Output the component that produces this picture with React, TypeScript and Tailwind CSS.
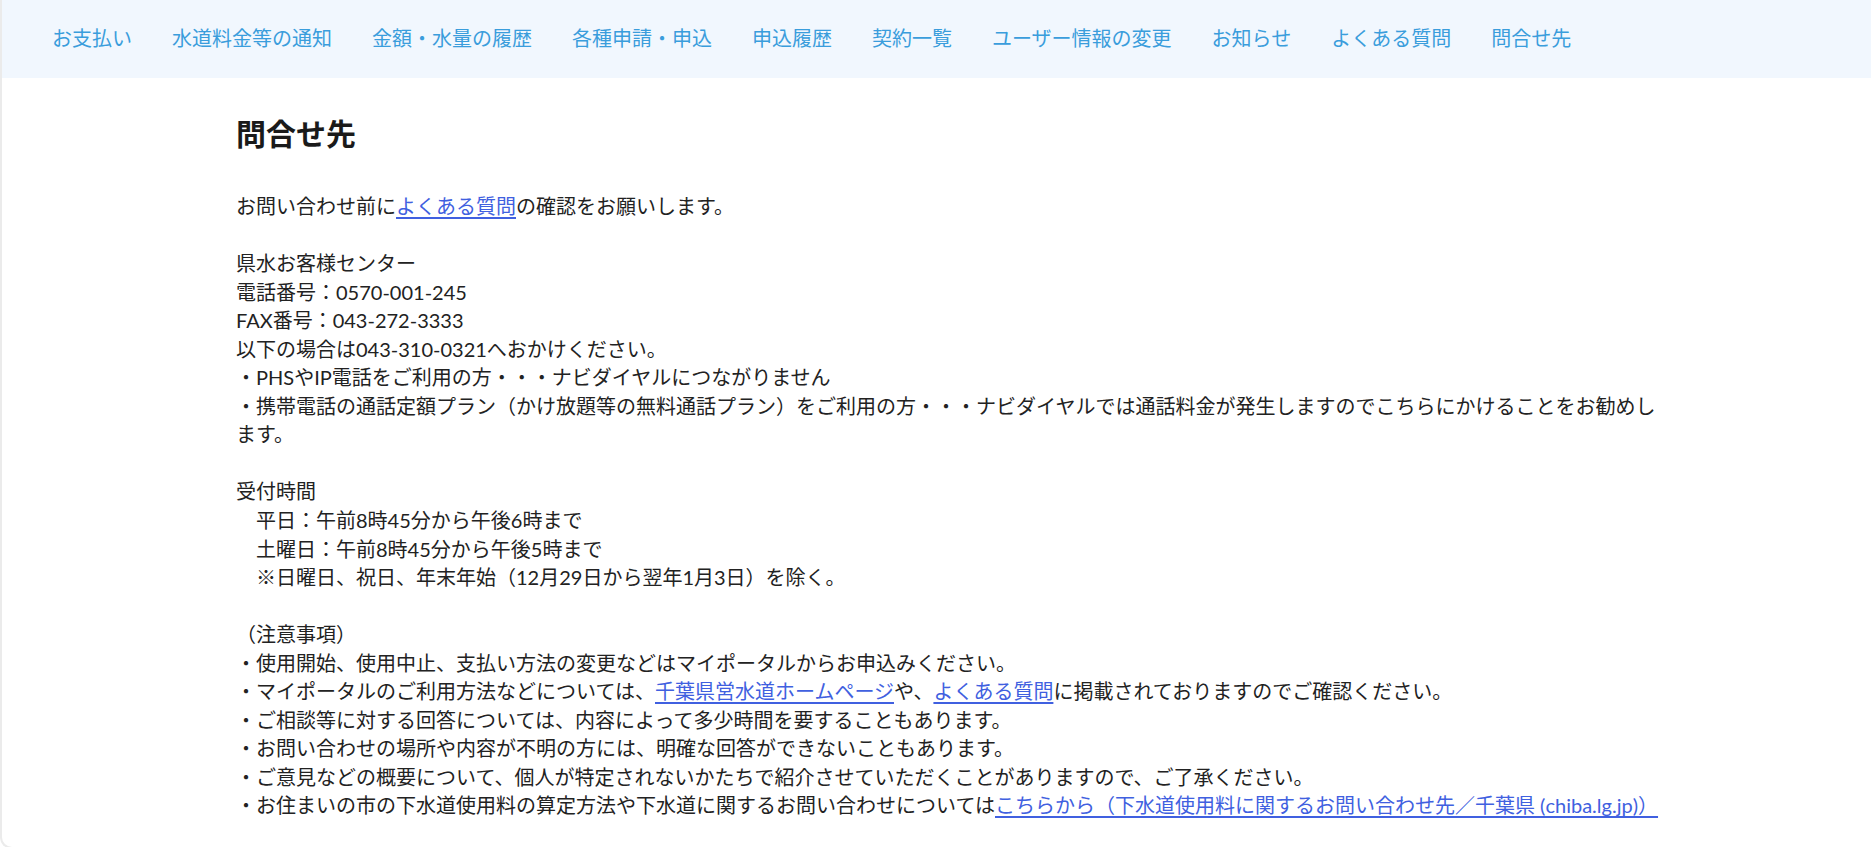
const navItems = [
  'お支払い',
  '水道料金等の通知',
  '金額・水量の履歴',
  '各種申請・申込',
  '申込履歴',
  '契約一覧',
  'ユーザー情報の変更',
  'お知らせ',
  'よくある質問',
  '問合せ先',
];

const linkClass = 'text-[#4060e0] underline underline-offset-[3px]';

const App = () => {
  return (
    <div className="h-[849px] overflow-hidden rounded-bl-[12px] border-b-2 border-l-2 border-[#ebebeb] bg-white font-['Lato','Noto_Sans_CJK_JP',sans-serif] text-[#222]">
      <nav className="flex h-[78px] items-center gap-10 bg-[#f1f7fe] pl-[50px] pb-[2px]">
        {navItems.map((label) => (
          <a key={label} href="#" className="text-[20px] leading-none text-[#3a9ddc]">
            {label}
          </a>
        ))}
      </nav>

      <main className="ml-[234px] w-[1432px] pt-[33px]">
        <h1 className="text-[30px] font-bold leading-[45px] text-[#1a1a1a]">問合せ先</h1>

        <div className="mt-[36px] whitespace-pre-line text-[20px] leading-[28.55px]">
          <p>
            お問い合わせ前に<a href="#" className={linkClass}>よくある質問</a>の確認をお願いします。
          </p>
          <br />
          <p>
            {`県水お客様センター
電話番号：0570-001-245
FAX番号：043-272-3333
以下の場合は043-310-0321へおかけください。
・PHSやIP電話をご利用の方・・・ナビダイヤルにつながりません
・携帯電話の通話定額プラン（かけ放題等の無料通話プラン）をご利用の方・・・ナビダイヤルでは通話料金が発生しますのでこちらにかけることをお勧めします。`}
          </p>
          <br />
          <p>
            {`受付時間
　平日：午前8時45分から午後6時まで
　土曜日：午前8時45分から午後5時まで
　※日曜日、祝日、年末年始（12月29日から翌年1月3日）を除く。`}
          </p>
          <br />
          <p>（注意事項）</p>
          <p>・使用開始、使用中止、支払い方法の変更などはマイポータルからお申込みください。</p>
          <p>
            ・マイポータルのご利用方法などについては、
            <a href="#" className={linkClass}>千葉県営水道ホームページ</a>や、
            <a href="#" className={linkClass}>よくある質問</a>に掲載されておりますのでご確認ください。
          </p>
          <p>・ご相談等に対する回答については、内容によって多少時間を要することもあります。</p>
          <p>・お問い合わせの場所や内容が不明の方には、明確な回答ができないこともあります。</p>
          <p>・ご意見などの概要について、個人が特定されないかたちで紹介させていただくことがありますので、ご了承ください。</p>
          <p>
            ・お住まいの市の下水道使用料の算定方法や下水道に関するお問い合わせについては
            <a href="#" className={linkClass}>こちらから（下水道使用料に関するお問い合わせ先／千葉県 (chiba.lg.jp)）</a>
          </p>
        </div>
      </main>
    </div>
  );
};

export default App;
